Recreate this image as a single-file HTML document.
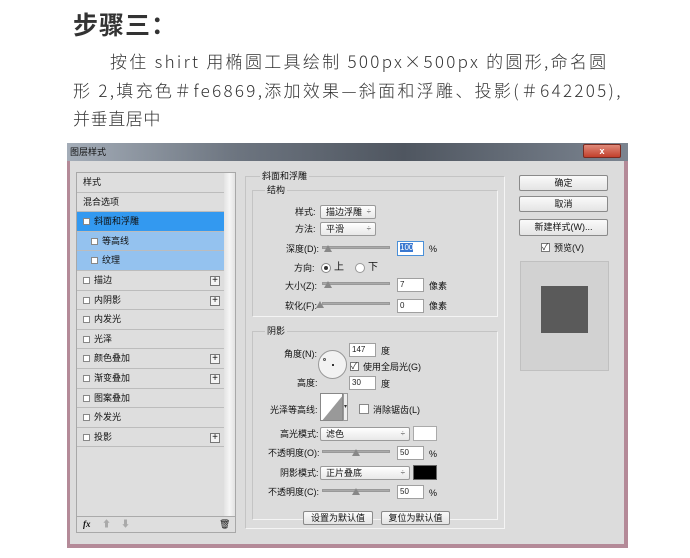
<!DOCTYPE html><html><head><meta charset="utf-8"><style>
*{margin:0;padding:0;box-sizing:border-box}
body{width:690px;height:558px;background:#fff;position:relative;overflow:hidden;font-family:"Liberation Sans","Noto Sans CJK SC",sans-serif;color:#333}
.a{position:absolute}
.t{font-size:9px;color:#111;white-space:nowrap;line-height:12px}
.row{position:absolute;left:77px;width:147px;height:19.6px;border-bottom:1px solid #bcbcbc;font-size:9px;color:#111;line-height:19px;padding-left:6px}
.cb{display:inline-block;width:7px;height:7px;border:1px solid #888;background:#fff;margin-right:4px;vertical-align:-1px}
.plus{position:absolute;right:4px;top:5px;width:10px;height:10px;border:1px solid #777;background:#f4f4f4;font-size:10px;line-height:8px;text-align:center}
.inp{position:absolute;background:#fff;border:1px solid #a0a0a0;font-size:8px;line-height:12px;padding-left:2px;color:#222}
.sel{position:absolute;background:linear-gradient(#fff,#e8e8e8);border:1px solid #9a9a9a;border-radius:2px;font-size:9px;line-height:12px;padding-left:5px;color:#111}
.sel:after{content:"÷";position:absolute;right:4px;top:0;font-size:8px;color:#555}
.sl{position:absolute;height:3px;background:#aaa;border:1px solid #999;width:68px}
.kn{position:absolute;width:0;height:0;border-left:4px solid transparent;border-right:4px solid transparent;border-bottom:7px solid #888}
.btn{position:absolute;background:linear-gradient(#fafafa,#e4e4e4);border:1px solid #8a8a8a;border-radius:2px;font-size:9px;text-align:center;color:#111}
.box{position:absolute;border:1px solid #c4c4c4;border-right-color:#f4f4f4;border-bottom-color:#f4f4f4}
.p{position:absolute;font-size:17px;line-height:20px;color:#333;font-family:'Noto Sans CJK SC',sans-serif;white-space:nowrap;font-weight:300}
</style></head><body>
<div class="a" style="left:73px;top:6px;font-size:25px;font-weight:bold;color:#333;font-family:'Noto Sans CJK SC',sans-serif;letter-spacing:1px">步骤三：</div>
<div class="p" style="left:110px;top:51px;letter-spacing:2.3px">按住 shirt 用椭圆工具绘制 500px×500px 的圆形,命名圆</div>
<div class="p" style="left:73px;top:80px;letter-spacing:2.3px">形 2,填充色＃fe6869,添加效果—斜面和浮雕、投影(＃642205),</div>
<div class="p" style="left:73px;top:108px;letter-spacing:0.6px">并垂直居中</div>

<div class="a" style="left:67px;top:143px;width:561px;height:405px;background:#b48a98"></div>
<div class="a" style="left:67px;top:143px;width:561px;height:18px;background:linear-gradient(90deg,#a4adb8,#6d7580 30%,#4f5660 60%,#7b8490)"></div>
<div class="a t" style="left:70px;top:146px;color:#111">图层样式</div>
<div class="a" style="left:583px;top:144px;width:38px;height:14px;background:linear-gradient(#e08a7a,#c2402c);border:1px solid #7a2a20;border-radius:2px;color:#fff;font-size:9px;text-align:center;line-height:12px;font-weight:bold">x</div>
<div class="a" style="left:70px;top:161px;width:554px;height:383px;background:#dcdcdc"></div>

<div class="a" style="left:76px;top:172px;width:160px;height:361px;border:1px solid #a8a8a8;background:#dedede"></div>
<div class="a" style="left:224px;top:173px;width:11px;height:343px;background:linear-gradient(90deg,#e2e2e2,#f6f6f6,#e2e2e2)"></div>
<div class="row" style="top:173px">样式</div>
<div class="row" style="top:192.6px">混合选项</div>
<div class="row" style="top:212.2px;background:#3399f0;color:#111"><span class="cb"></span>斜面和浮雕</div>
<div class="row" style="top:231.8px;background:#94c2ef;padding-left:14px"><span class="cb"></span>等高线</div>
<div class="row" style="top:251.4px;background:#94c2ef;padding-left:14px"><span class="cb"></span>纹理</div>
<div class="row" style="top:271px"><span class="cb"></span>描边<div class="plus">+</div></div>
<div class="row" style="top:290.6px"><span class="cb"></span>内阴影<div class="plus">+</div></div>
<div class="row" style="top:310.2px"><span class="cb"></span>内发光</div>
<div class="row" style="top:329.8px"><span class="cb"></span>光泽</div>
<div class="row" style="top:349.4px"><span class="cb"></span>颜色叠加<div class="plus">+</div></div>
<div class="row" style="top:369px"><span class="cb"></span>渐变叠加<div class="plus">+</div></div>
<div class="row" style="top:388.6px"><span class="cb"></span>图案叠加</div>
<div class="row" style="top:408.2px"><span class="cb"></span>外发光</div>
<div class="row" style="top:427.8px"><span class="cb"></span>投影<div class="plus">+</div></div>
<div class="a" style="left:77px;top:516px;width:158px;height:1px;background:#aaa"></div>
<div class="a t" style="left:83px;top:518px;font-style:italic;font-weight:bold;font-family:'Liberation Serif',serif">fx</div>
<div class="a t" style="left:102px;top:518px;color:#aaa">⬆</div>
<div class="a t" style="left:121px;top:518px;color:#aaa">⬇</div>
<div class="a t" style="left:219px;top:518px">🗑</div>

<div class="box" style="left:245px;top:176px;width:260px;height:353px"></div>
<div class="a t" style="left:260px;top:170px;background:#dcdcdc;padding:0 2px">斜面和浮雕</div>
<div class="box" style="left:252px;top:190px;width:246px;height:127px"></div>
<div class="a t" style="left:265px;top:184px;background:#dcdcdc;padding:0 2px">结构</div>
<div class="a t" style="left:295px;top:206px">样式:</div><div class="sel" style="left:320px;top:205px;width:56px;height:14px">描边浮雕</div>
<div class="a t" style="left:295px;top:223px">方法:</div><div class="sel" style="left:320px;top:222px;width:56px;height:14px">平滑</div>
<div class="a t" style="left:286px;top:243px">深度(D):</div><div class="sl" style="left:322px;top:246px"></div><div class="kn" style="left:324px;top:245px"></div>
<div class="inp" style="left:397px;top:241px;width:27px;height:15px;border-color:#4a90d9"><span style="background:#3a78d0;color:#fff">100</span></div><div class="a t" style="left:429px;top:243px">%</div>
<div class="a t" style="left:294px;top:262px">方向:</div>
<div class="a" style="left:321px;top:263px;width:10px;height:10px;border:1px solid #888;border-radius:50%;background:#fff"><div style="margin:2px;width:4px;height:4px;border-radius:50%;background:#333"></div></div>
<div class="a t" style="left:334px;top:262px;font-size:10px">上</div>
<div class="a" style="left:355px;top:263px;width:10px;height:10px;border:1px solid #999;border-radius:50%;background:#fff"></div>
<div class="a t" style="left:368px;top:262px;font-size:10px">下</div>
<div class="a t" style="left:285px;top:280px">大小(Z):</div><div class="sl" style="left:322px;top:282px"></div><div class="kn" style="left:324px;top:281px"></div>
<div class="inp" style="left:397px;top:278px;width:27px;height:14px">7</div><div class="a t" style="left:429px;top:280px">像素</div>
<div class="a t" style="left:285px;top:300px">软化(F):</div><div class="sl" style="left:322px;top:302px"></div><div class="kn" style="left:316px;top:301px"></div>
<div class="inp" style="left:397px;top:299px;width:27px;height:14px">0</div><div class="a t" style="left:429px;top:300px">像素</div>

<div class="box" style="left:252px;top:331px;width:246px;height:189px"></div>
<div class="a t" style="left:265px;top:325px;background:#dcdcdc;padding:0 2px">阴影</div>
<div class="a t" style="left:284px;top:348px">角度(N):</div>
<div class="a" style="left:318px;top:350px;width:29px;height:29px;border:1px solid #999;border-radius:50%;background:#f2f2f2"><div class="a" style="left:13px;top:13px;width:2px;height:2px;background:#333"></div><div class="a" style="left:4px;top:7px;width:3px;height:3px;border:1px solid #555;border-radius:50%"></div></div>
<div class="inp" style="left:349px;top:343px;width:27px;height:14px">147</div><div class="a t" style="left:381px;top:345px">度</div>
<div class="a" style="left:350px;top:362px;width:9px;height:9px;border:1px solid #777;background:#fff;font-size:9px;line-height:7px">✓</div>
<div class="a t" style="left:363px;top:361px">使用全局光(G)</div>
<div class="a t" style="left:297px;top:377px">高度:</div>
<div class="inp" style="left:349px;top:376px;width:27px;height:14px">30</div><div class="a t" style="left:381px;top:378px">度</div>
<div class="a t" style="left:270px;top:404px">光泽等高线:</div>
<div class="a" style="left:320px;top:393px;width:23px;height:28px;border:1px solid #888;background:#fff;overflow:hidden"><svg width="23" height="28"><polygon points="0,28 23,0 23,28" fill="#999"/></svg></div>
<div class="a" style="left:343px;top:393px;width:5px;height:28px;border:1px solid #999;background:#eee;font-size:6px;line-height:26px">▾</div>
<div class="a" style="left:359px;top:404px;width:10px;height:10px;border:1px solid #888;background:#fff"></div>
<div class="a t" style="left:373px;top:404px">消除锯齿(L)</div>
<div class="a t" style="left:280px;top:428px">高光模式:</div><div class="sel" style="left:320px;top:427px;width:90px;height:14px">滤色</div>
<div class="a" style="left:413px;top:426px;width:24px;height:15px;background:#fff;border:1px solid #aaa"></div>
<div class="a t" style="left:268px;top:447px">不透明度(O):</div><div class="sl" style="left:322px;top:450px"></div><div class="kn" style="left:352px;top:449px"></div>
<div class="inp" style="left:397px;top:446px;width:27px;height:14px">50</div><div class="a t" style="left:429px;top:448px">%</div>
<div class="a t" style="left:280px;top:467px">阴影模式:</div><div class="sel" style="left:320px;top:466px;width:90px;height:14px">正片叠底</div>
<div class="a" style="left:413px;top:465px;width:24px;height:15px;background:#000;border:1px solid #666"></div>
<div class="a t" style="left:268px;top:486px">不透明度(C):</div><div class="sl" style="left:322px;top:489px"></div><div class="kn" style="left:352px;top:488px"></div>
<div class="inp" style="left:397px;top:485px;width:27px;height:14px">50</div><div class="a t" style="left:429px;top:487px">%</div>
<div class="btn" style="left:303px;top:511px;width:70px;height:14px;line-height:12px">设置为默认值</div>
<div class="btn" style="left:381px;top:511px;width:69px;height:14px;line-height:12px">复位为默认值</div>

<div class="btn" style="left:519px;top:175px;width:89px;height:16px;line-height:14px">确定</div>
<div class="btn" style="left:519px;top:196px;width:89px;height:16px;line-height:14px">取消</div>
<div class="btn" style="left:519px;top:219px;width:89px;height:17px;line-height:15px">新建样式(W)...</div>
<div class="a" style="left:541px;top:243px;width:9px;height:9px;border:1px solid #777;background:#fff;font-size:9px;line-height:7px">✓</div>
<div class="a t" style="left:554px;top:242px">预览(V)</div>
<div class="a" style="left:520px;top:261px;width:89px;height:110px;background:#d2d2d2;border:1px solid #c0c0c0"></div>
<div class="a" style="left:541px;top:286px;width:47px;height:47px;background:#5a5a5a"></div>
</body></html>
